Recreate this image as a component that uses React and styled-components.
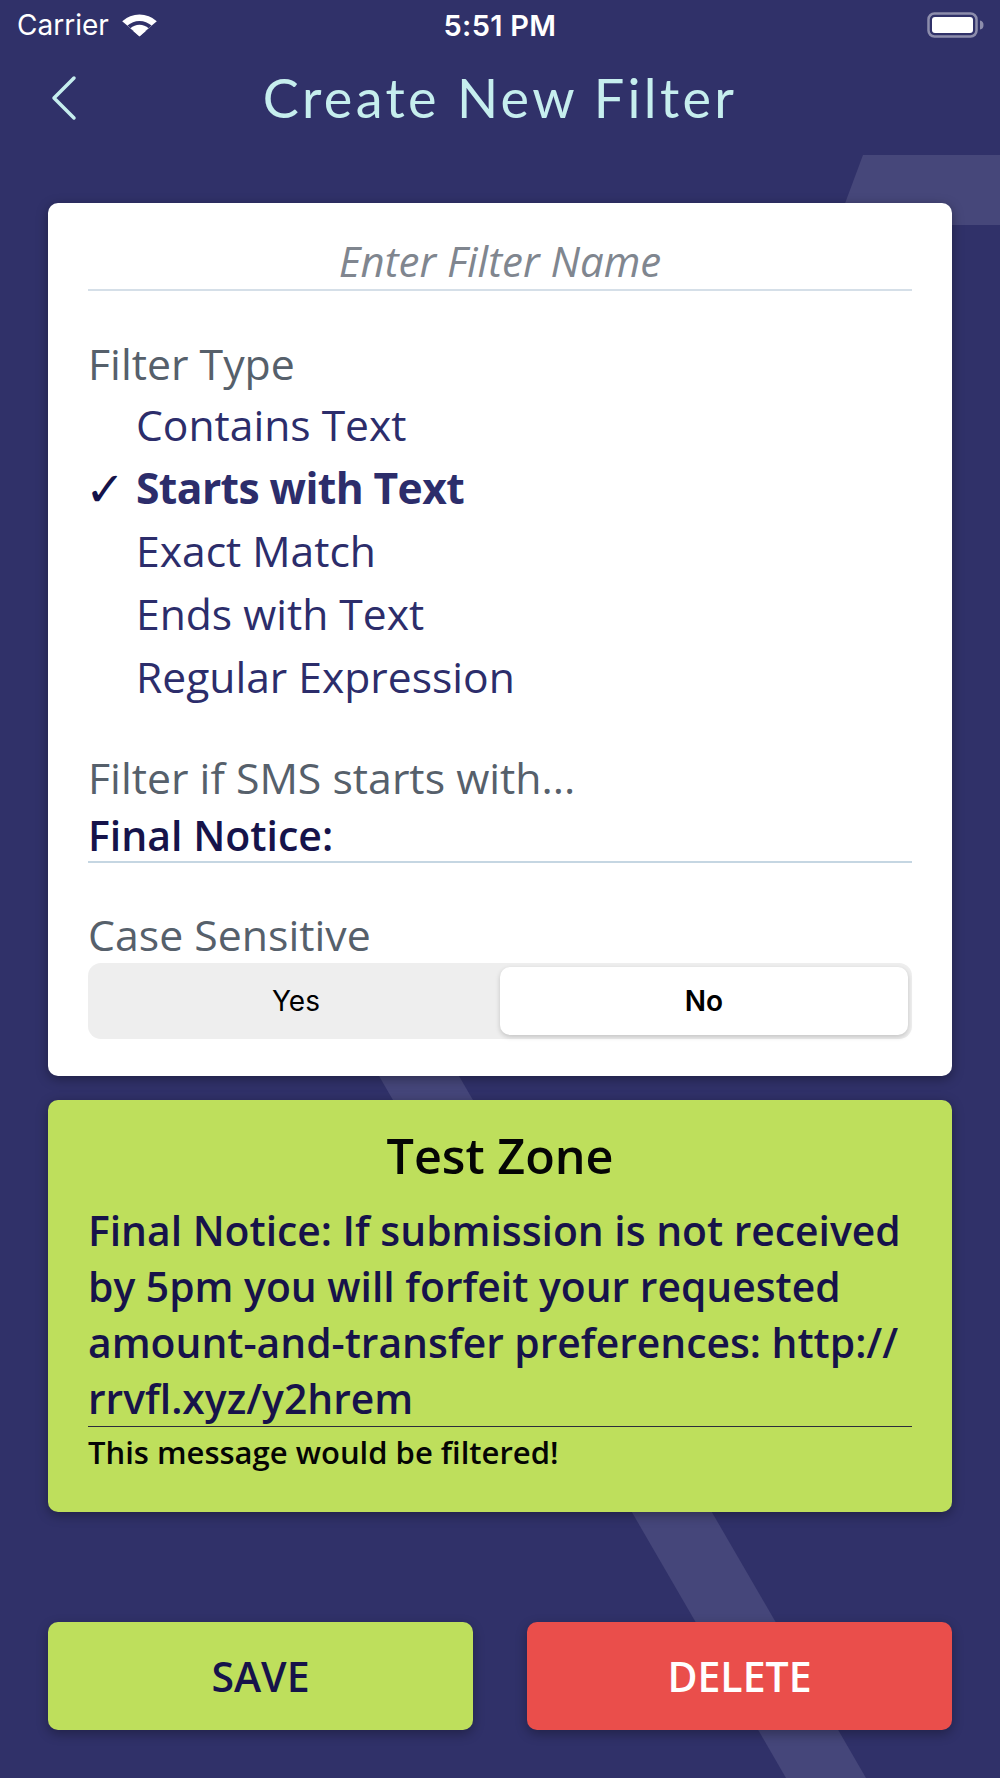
import React from "react";
import styled, { createGlobalStyle } from "styled-components";

const GlobalStyle = createGlobalStyle`
  html, body { margin: 0; padding: 0; }
  body { background: #303169; font-family: "Open Sans", sans-serif; }
  * { box-sizing: border-box; }
`;

const Page = styled.div`
  position: relative;
  width: 1000px;
  min-height: 1778px;
  overflow: hidden;
  background: #303169;
`;

const Backdrop = styled.svg`
  position: absolute;
  left: 0;
  top: 0;
  width: 1000px;
  height: 1778px;
  z-index: 0;
  pointer-events: none;
`;

const Content = styled.div`
  position: relative;
  z-index: 1;
  display: flex;
  flex-direction: column;
`;

const StatusBar = styled.div`
  height: 50px;
  display: grid;
  grid-template-columns: 1fr auto 1fr;
  align-items: center;
  padding: 0 13px 0 17px;
  color: #fff;
  font-family: Inter, "Liberation Sans", sans-serif;
`;

const Carrier = styled.div`
  display: flex;
  align-items: center;
  gap: 12px;
  font-size: 28px;
  font-weight: 400;
`;

const Clock = styled.div`
  font-size: 29px;
  font-weight: 600;
  letter-spacing: 0.3px;
  margin-right: 4px;
`;

const BatteryWrap = styled.div`
  justify-self: end;
  display: flex;
  align-items: center;
`;

const Header = styled.header`
  height: 96px;
  display: grid;
  grid-template-columns: 1fr auto 1fr;
  align-items: center;
`;

const BackButton = styled.button`
  justify-self: start;
  margin-left: 47px;
  padding: 0 3px;
  border: none;
  background: transparent;
  display: flex;
  align-items: center;
  cursor: pointer;
`;

const Title = styled.h1`
  margin: 0;
  font-family: Lato, "Noto Sans", sans-serif;
  font-weight: 400;
  font-size: 54px;
  letter-spacing: 3.3px;
  color: #c6eeee;
  line-height: 60px;
`;

const Card = styled.section`
  margin: 57px 48px 0;
  background: #ffffff;
  border-radius: 10px;
  padding: 28px 40px 37px;
  box-shadow: 0 3px 12px rgba(0, 0, 0, 0.35);
  display: flex;
  flex-direction: column;
`;

const NameInput = styled.input`
  width: 100%;
  height: 60px;
  border: none;
  border-bottom: 2px solid #d5dfe8;
  padding: 0;
  outline: none;
  text-align: center;
  font-family: "Open Sans", sans-serif;
  font-size: 42px;
  color: #15134a;
  background: transparent;
  &::placeholder {
    color: #80868f;
    font-style: italic;
    font-weight: 500;
  }
`;

const Label = styled.div`
  margin-top: ${(p) => p.$gap}px;
  font-size: 42.8px;
  line-height: 52px;
  color: #56606b;
`;

const OptionList = styled.ul`
  list-style: none;
  margin: 2px 0 0;
  padding: 0;
`;

const Option = styled.li`
  display: grid;
  grid-template-columns: 48px 1fr;
  align-items: center;
  height: 63px;
  font-size: 42.6px;
  color: #2c2d6b;
  font-weight: ${(p) => (p.$selected ? 700 : 400)};
  letter-spacing: ${(p) => (p.$selected ? "-0.6px" : "0")};
`;

const Check = styled.span`
  font-family: "DejaVu Sans", sans-serif;
  font-size: 48px;
  font-weight: 400;
  color: #14124a;
  line-height: 1;
  margin-top: 4px;
  margin-left: -3px;
  letter-spacing: 0;
`;

const ValueInput = styled.input`
  width: 100%;
  height: 54px;
  margin-top: 5px;
  border: none;
  border-bottom: 2px solid #c5d6e2;
  padding: 0;
  outline: none;
  font-family: "Open Sans", sans-serif;
  font-size: 41px;
  font-weight: 600;
  color: #16134a;
  background: transparent;
`;

const Segmented = styled.div`
  margin-top: 2px;
  display: grid;
  grid-template-columns: 1fr 1fr;
  height: 76px;
  padding: 4px;
  background: #eeeeee;
  border-radius: 13px;
`;

const Segment = styled.button`
  border: none;
  border-radius: 10px;
  background: ${(p) => (p.$active ? "#ffffff" : "transparent")};
  box-shadow: ${(p) => (p.$active ? "0 2px 5px rgba(0,0,0,0.18)" : "none")};
  font-family: Inter, "Liberation Sans", sans-serif;
  font-size: 28px;
  font-weight: ${(p) => (p.$active ? 600 : 400)};
  color: #000;
  cursor: pointer;
`;

const TestZone = styled.section`
  margin: 24px 48px 0;
  background: #bedf5c;
  border-radius: 10px;
  padding: 25px 40px 41px;
  box-shadow: 0 3px 12px rgba(0, 0, 0, 0.35);
`;

const ZoneTitle = styled.h2`
  margin: 0;
  text-align: center;
  font-size: 48.5px;
  line-height: 60px;
  font-weight: 600;
  color: #050505;
`;

const Message = styled.p`
  margin: 17px 0 0;
  font-size: 40.8px;
  line-height: 56px;
  font-weight: 600;
  color: #17134a;
  white-space: nowrap;
  border-bottom: 1px solid #2c2c3c;
`;

const Verdict = styled.p`
  margin: 6px 0 0;
  font-size: 31px;
  line-height: 38px;
  font-weight: 600;
  color: #050505;
`;

const Actions = styled.div`
  margin: 110px 48px 49px;
  display: grid;
  grid-template-columns: 1fr 1fr;
  gap: 54px;
`;

const ActionButton = styled.button`
  height: 108px;
  border: none;
  border-radius: 10px;
  background: ${(p) => (p.$danger ? "#ea4e4b" : "#bedf5c")};
  color: ${(p) => (p.$danger ? "#ffffff" : "#16134a")};
  font-family: "Open Sans", sans-serif;
  font-size: 41px;
  font-weight: 600;
  box-shadow: 0 4px 12px rgba(0, 0, 0, 0.3);
  cursor: pointer;
`;

function WifiIcon() {
  return (
    <svg width="37" height="24" viewBox="0 0 37 24" aria-hidden="true">
      <path d="M18.5 23 L1.2 8.2 A26 26 0 0 1 35.8 8.2 Z" fill="#fff" />
      <path d="M18.5 23 L6.4 12.6 A18 18 0 0 1 30.6 12.6 Z" fill="#303169" />
      <path d="M18.5 23 L9.4 15.2 A13.5 13.5 0 0 1 27.6 15.2 Z" fill="#fff" />
      <path d="M18.5 23 L14.3 19.4 A6.5 6.5 0 0 1 22.7 19.4 Z" fill="#303169" />
      <path d="M18.5 23.5 L12.4 18.2 A9.5 9.5 0 0 1 24.6 18.2 Z" fill="#fff" />
    </svg>
  );
}

function BatteryIcon() {
  return (
    <svg width="60" height="26" viewBox="0 0 60 26" aria-hidden="true">
      <rect x="1.5" y="1.5" width="48" height="23" rx="6" fill="none" stroke="rgba(255,255,255,0.45)" strokeWidth="2.5" />
      <rect x="5" y="5" width="41" height="16" rx="3" fill="#fff" />
      <path d="M53 8.5 Q56.5 9 56.5 13 Q56.5 17 53 17.5 Z" fill="rgba(255,255,255,0.45)" />
    </svg>
  );
}

function ChevronLeft() {
  return (
    <svg width="28" height="46" viewBox="0 0 28 46" aria-hidden="true">
      <path d="M24 3 L4 23 L24 43" fill="none" stroke="#c6eeee" strokeWidth="3.5" strokeLinecap="round" strokeLinejoin="round" />
    </svg>
  );
}

const filterTypes = [
  "Contains Text",
  "Starts with Text",
  "Exact Match",
  "Ends with Text",
  "Regular Expression",
];

export default function App() {
  const selected = "Starts with Text";
  return (
    <>
      <GlobalStyle />
      <Page>
        <Backdrop viewBox="0 0 1000 1778" aria-hidden="true">
          <polygon points="863,155 1000,155 1000,225 837,225" fill="#46477a" />
          <polygon points="277,900 357,900 866,1778 786,1778" fill="#45467a" />
        </Backdrop>
        <Content>
          <StatusBar>
            <Carrier>
              Carrier <WifiIcon />
            </Carrier>
            <Clock>5:51 PM</Clock>
            <BatteryWrap>
              <BatteryIcon />
            </BatteryWrap>
          </StatusBar>
          <Header>
            <BackButton aria-label="Back">
              <ChevronLeft />
            </BackButton>
            <Title>Create New Filter</Title>
            <span />
          </Header>
          <Card>
            <NameInput placeholder="Enter Filter Name" />
            <Label $gap={47}>Filter Type</Label>
            <OptionList>
              {filterTypes.map((t) => (
                <Option key={t} $selected={t === selected}>
                  <Check>{t === selected ? "✓" : ""}</Check>
                  <span>{t}</span>
                </Option>
              ))}
            </OptionList>
            <Label $gap={45}>Filter if SMS starts with...</Label>
            <ValueInput defaultValue="Final Notice:" />
            <Label $gap={46}>Case Sensitive</Label>
            <Segmented>
              <Segment>Yes</Segment>
              <Segment $active>No</Segment>
            </Segmented>
          </Card>
          <TestZone>
            <ZoneTitle>Test Zone</ZoneTitle>
            <Message>
              Final Notice: If submission is not received
              <br />
              by 5pm you will forfeit your requested
              <br />
              amount-and-transfer preferences: http://
              <br />
              rrvfl.xyz/y2hrem
            </Message>
            <Verdict>This message would be filtered!</Verdict>
          </TestZone>
          <Actions>
            <ActionButton>SAVE</ActionButton>
            <ActionButton $danger>DELETE</ActionButton>
          </Actions>
        </Content>
      </Page>
    </>
  );
}
